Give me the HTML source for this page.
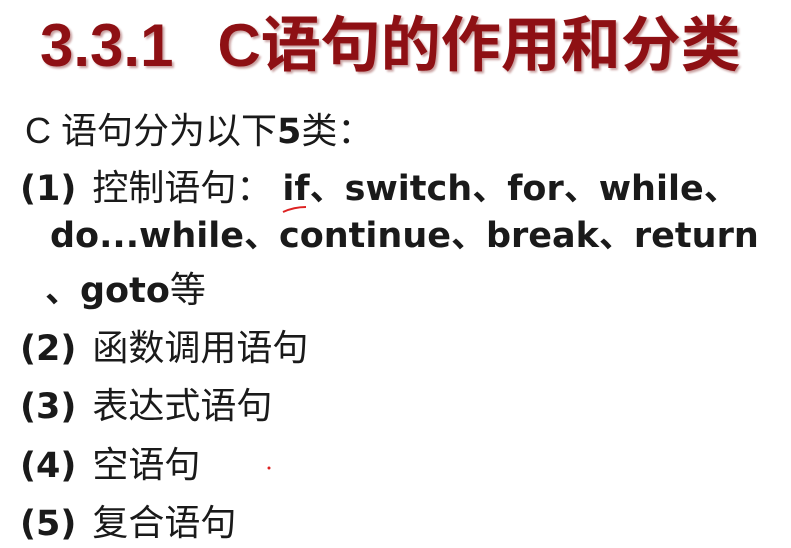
<!DOCTYPE html>
<html><head><meta charset="utf-8"><style>
body{margin:0;width:791px;height:548px;background:#fff;overflow:hidden;position:relative;font-family:"Liberation Sans","Noto Sans CJK SC",sans-serif;color:#1a1a1a}
.l{position:absolute;left:0;line-height:40px;white-space:nowrap;font-size:36px}
.b{font-family:"DejaVu Sans","Noto Sans CJK SC",sans-serif;font-weight:bold;font-size:35px}
.t{position:absolute;left:40px;top:8px;line-height:66px;font-size:60px;font-weight:bold;color:#8e1014;text-shadow:2px 2px 2px #c9a0a0;white-space:nowrap}
.cj{font-family:"Noto Sans CJK SC",sans-serif;font-weight:normal}
.n{margin-right:6px}
</style></head><body>
<div class="t">3.3.1<span style="display:inline-block;width:44px"></span>C<span style="font-family:'Noto Sans CJK SC',sans-serif">语句的作用和分类</span></div>
<div class="l" style="top:108px;left:25px">C <span class="cj">语句分为以下</span><b class="b">5</b><span class="cj">类：</span></div>
<div class="l" style="top:165px;left:20px"><span class="b n">(1)</span> <span class="cj">控制语句：</span> <span class="b">if、switch、for、while、</span></div>
<div class="l" style="top:215px;left:50px"><span class="b">do...while、continue、break、return</span></div>
<div class="l" style="top:267px;left:45px"><span class="b">、goto</span><span class="cj">等</span></div>
<div class="l" style="top:325px;left:20px"><span class="b n">(2)</span> <span class="cj">函数调用语句</span></div>
<div class="l" style="top:383px;left:20px"><span class="b n">(3)</span> <span class="cj">表达式语句</span></div>
<div class="l" style="top:442px;left:20px"><span class="b n">(4)</span> <span class="cj">空语句</span></div>
<div class="l" style="top:500px;left:20px"><span class="b n">(5)</span> <span class="cj">复合语句</span></div>
<svg style="position:absolute;left:0;top:0" width="791" height="548"><path d="M283 212 Q294 207 306 207" stroke="#d22" stroke-width="2" fill="none"/><circle cx="269" cy="468" r="1.5" fill="#d22"/></svg>
</body></html>
